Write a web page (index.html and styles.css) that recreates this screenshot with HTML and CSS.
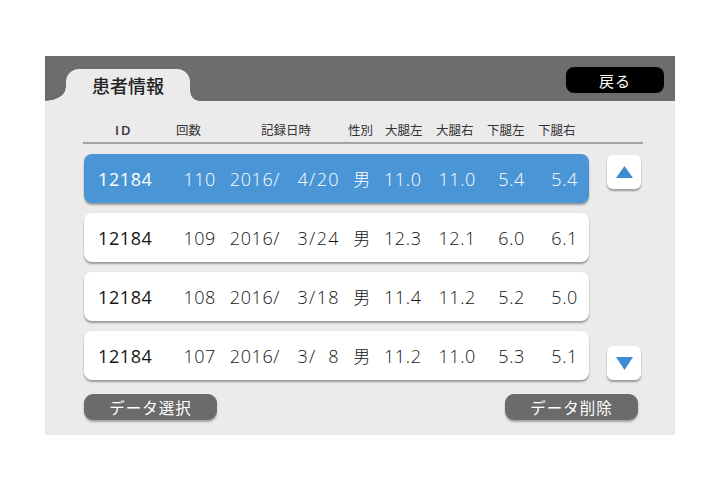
FILE: index.html
```html
<!DOCTYPE html>
<html lang="ja">
  <head>
    <meta charset="UTF-8" />
    <meta name="viewport" content="width=device-width, initial-scale=1.0" />
    <title>患者情報</title>
    <link rel="stylesheet" href="styles.css">
  </head>
  <body>
    <div class="panel">
      <div class="topbar">
        <div class="tab">患者情報</div>
        <button class="back">戻る</button>
      </div>
      <div class="content">
        <div class="thead">
          <span class="h-id">ID</span>
          <span>回数</span>
          <span>記録日時</span>
          <span>性別</span>
          <span>大腿左</span>
          <span>大腿右</span>
          <span>下腿左</span>
          <span>下腿右</span>
        </div>
        <div class="list">
          <div class="rows">
            <div class="row selected">
              <span class="id">12184</span>
              <span>110</span>
              <span>2016/</span>
              <span class="md">4/20</span>
              <span class="sex">男</span>
              <span>11.0</span>
              <span>11.0</span>
              <span>5.4</span>
              <span>5.4</span>
            </div>
            <div class="row">
              <span class="id">12184</span>
              <span>109</span>
              <span>2016/</span>
              <span class="md">3/24</span>
              <span class="sex">男</span>
              <span>12.3</span>
              <span>12.1</span>
              <span>6.0</span>
              <span>6.1</span>
            </div>
            <div class="row">
              <span class="id">12184</span>
              <span>108</span>
              <span>2016/</span>
              <span class="md">3/18</span>
              <span class="sex">男</span>
              <span>11.4</span>
              <span>11.2</span>
              <span>5.2</span>
              <span>5.0</span>
            </div>
            <div class="row">
              <span class="id">12184</span>
              <span>107</span>
              <span>2016/</span>
              <span class="md">3/&#8199;8</span>
              <span class="sex">男</span>
              <span>11.2</span>
              <span>11.0</span>
              <span>5.3</span>
              <span>5.1</span>
            </div>
          </div>
          <div class="scroll">
            <button class="arrow">
              <svg width="17" height="12" viewBox="0 0 17 12"><polygon points="8.5,0 17,12 0,12" fill="#3a8bd3" /></svg>
            </button>
            <button class="arrow">
              <svg width="17" height="13" viewBox="0 0 17 13"><polygon points="0,0 17,0 8.5,13" fill="#3a8bd3" /></svg>
            </button>
          </div>
        </div>
        <div class="actions">
          <button class="action">データ選択</button>
          <button class="action">データ削除</button>
        </div>
      </div>
    </div>
  </body>
</html>
```

FILE: styles.css
```css
body {
  margin: 0;
  background: #ffffff;
  font-family: "Open Sans", "Noto Sans CJK JP", sans-serif;
}
button {
  font-family: "Noto Sans CJK JP", sans-serif;
  border: none;
  cursor: pointer;
}
.panel {
  width: 630px;
  height: 379px;
  margin: 56px 0 0 45px;
  background: #ebebec;
}
.topbar {
  height: 45px;
  background: #6d6d6d;
  display: flex;
  justify-content: space-between;
  padding: 0 11px 0 21px;
}
.tab {
  position: relative;
  align-self: flex-end;
  width: 124px;
  height: 32px;
  background: #ebebec;
  border-radius: 13px 13px 0 0;
  font-family: "Noto Sans CJK JP", sans-serif;
  font-size: 18px;
  font-weight: 500;
  line-height: 32px;
  text-align: center;
  color: #222;
}
.tab::before {
  content: "";
  position: absolute;
  left: -21px;
  bottom: 0;
  width: 21px;
  height: 13px;
  background: radial-gradient(ellipse 21px 13px at 0 0, transparent 96%, #ebebec 100%);
}
.tab::after {
  content: "";
  position: absolute;
  right: -9px;
  bottom: 0;
  width: 9px;
  height: 10px;
  background: radial-gradient(ellipse 9px 10px at 100% 0, transparent 94%, #ebebec 100%);
}
.back {
  margin-top: 11px;
  width: 98px;
  height: 26px;
  background: #000;
  color: #fff;
  border-radius: 8px;
  font-size: 15px;
  letter-spacing: 1px;
  padding: 0;
}
.content {
  padding: 0 32px 0 39px;
}
.thead {
  display: grid;
  grid-template-columns: 61px 85px 87px 37px 51px 51px 51px auto;
  height: 43px;
  padding: 20px 0 0 32px;
  box-sizing: border-box;
  border-bottom: 2px solid #a3a3a3;
  margin-left: -1px;
  font-family: "Noto Sans CJK JP", sans-serif;
  font-size: 12.5px;
  line-height: 18px;
  color: #333;
}
.h-id {
  font-family: "Open Sans", sans-serif;
  font-weight: 600;
  letter-spacing: 2px;
  font-size: 13px;
}
.list {
  display: flex;
  margin-top: 10px;
}
.rows {
  width: 505px;
  display: flex;
  flex-direction: column;
  gap: 10px;
}
.row {
  display: grid;
  grid-template-columns: 82px 50px 64px 60px 44px 37px 55px 49px 53px;
  align-items: center;
  height: 49px;
  background: #fff;
  border-radius: 8px;
  box-shadow: 0 2px 2px rgba(0, 0, 0, 0.35);
  font-size: 18px;
  font-weight: 300;
  letter-spacing: 0.6px;
  color: #141414;
  text-align: right;
}
.row .id {
  text-align: left;
  padding-left: 14px;
  font-weight: 500;
}
.row .md {
  letter-spacing: 1.4px;
}
.row .sex {
  text-align: center;
  font-family: "Noto Sans CJK JP", sans-serif;
  font-weight: 300;
  font-size: 17px;
}
.row.selected {
  background: #4a95d6;
  color: #fff;
}
.scroll {
  display: flex;
  flex-direction: column;
  justify-content: space-between;
  margin-left: 18px;
  padding-top: 1px;
}
.arrow {
  width: 34px;
  height: 34px;
  background: #fff;
  border-radius: 6px;
  box-shadow: 0 2px 2px rgba(0, 0, 0, 0.35);
  display: flex;
  align-items: center;
  justify-content: center;
  padding: 0;
}
.actions {
  display: flex;
  justify-content: space-between;
  margin-top: 14px;
  width: 554px;
}
.action {
  width: 133px;
  height: 26px;
  background: #6b6b6b;
  color: #fff;
  border-radius: 9px;
  box-shadow: 0 2px 2px rgba(0, 0, 0, 0.3);
  font-size: 15.5px;
  letter-spacing: 1px;
  padding: 0;
}
```
